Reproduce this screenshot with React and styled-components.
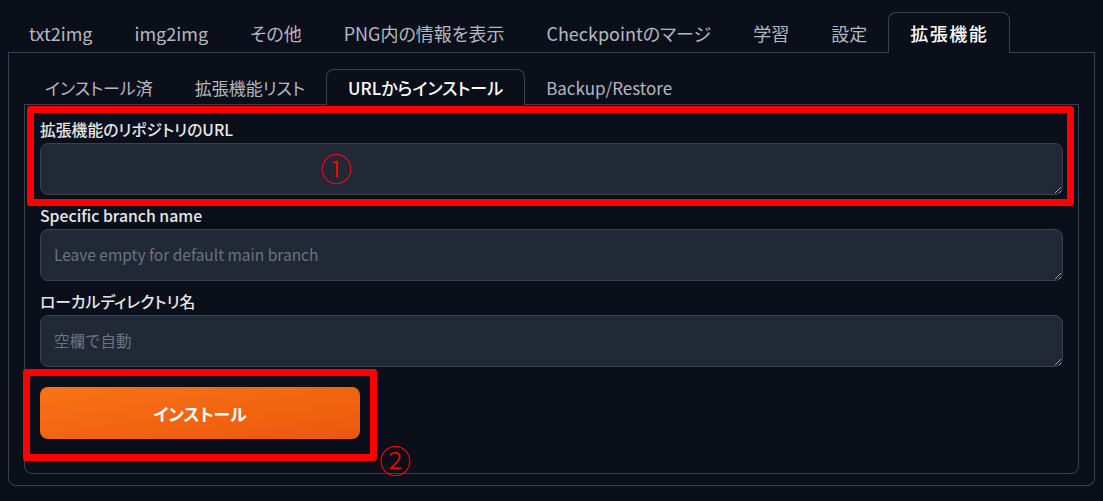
import styled, { createGlobalStyle } from "styled-components";

const GlobalStyle = createGlobalStyle`
    html, body {
        margin: 0;
        padding: 0;
        background: #0b0f19;
        color-scheme: dark;
    }
    body {
        font-family: "Noto Sans CJK JP", "Noto Sans", sans-serif;
        font-feature-settings: "palt";
    }
`;

const Page = styled.div`
    position: relative;
    width: 1103px;
    height: 501px;
    box-sizing: border-box;
    padding: 12px 8px 0 8px;
`;

const TabNav = styled.div`
    display: flex;
    height: ${(p) => p.$height}px;
    border-bottom: 1px solid #374151;
    box-sizing: content-box;
`;

const Tab = styled.button`
    font-family: inherit;
    font-feature-settings: "palt";
    font-size: ${(p) => p.$size}px;
    padding: 0 ${(p) => (p.$active ? 21 : 20)}px;
    background: #0b0f19;
    color: ${(p) => (p.$active ? "#ffffff" : "#b4b8c0")};
    font-weight: ${(p) => (p.$active ? 500 : 400)};
    letter-spacing: ${(p) => (p.$active && p.$wide ? "1.5px" : "0")};
    border: 1px solid ${(p) => (p.$active ? "#374151" : "transparent")};
    border-bottom: none;
    border-radius: 8px 8px 0 0;
    margin-bottom: ${(p) => (p.$active ? "-1px" : "0")};
    height: ${(p) => (p.$active ? "calc(100% + 1px)" : "100%")};
    cursor: pointer;
    white-space: nowrap;
`;

const OuterPanel = styled.div`
    border: 1px solid #374151;
    border-top: none;
    border-radius: 0 0 8px 8px;
    padding: 16px 15px 11px 15px;
`;

const InnerPanel = styled.div`
    border: 1px solid #374151;
    border-top: none;
    border-radius: 0 0 8px 8px;
    padding: 15px 15px 34px 15px;
    display: flex;
    flex-direction: column;
`;

const Fields = styled.div`
    display: flex;
    flex-direction: column;
    gap: 11px;
`;

const Field = styled.label`
    display: flex;
    flex-direction: column;
`;

const Label = styled.span`
    font-size: 15.8px;
    line-height: 20px;
    font-weight: 500;
    color: #e5e7eb;
    margin-bottom: 3px;
`;

const TextArea = styled.textarea`
    box-sizing: border-box;
    height: 52px;
    width: 100%;
    resize: vertical;
    background: #212836;
    border: 1px solid #374151;
    border-radius: 8px;
    padding: 13px 13px;
    font-family: inherit;
    font-size: 15.5px;
    color: #e5e7eb;
    outline: none;

    &::placeholder {
        color: #6b7280;
    }
`;

const InstallButton = styled.button`
    margin-top: 20px;
    width: 320px;
    height: 52px;
    border: none;
    border-radius: 8px;
    background: linear-gradient(to bottom right, #f97316, #ea580c);
    color: #ffffff;
    font-family: inherit;
    font-feature-settings: "palt";
    font-size: 17px;
    font-weight: 700;
    cursor: pointer;
`;

const Marker = styled.div`
    position: absolute;
    left: ${(p) => p.$x}px;
    top: ${(p) => p.$y}px;
    width: ${(p) => p.$w}px;
    height: ${(p) => p.$h}px;
    box-sizing: border-box;
    border: 7px solid #ff0000;
    border-radius: 3px;
    pointer-events: none;
`;

const Num = styled.span`
    position: absolute;
    left: ${(p) => p.$x}px;
    top: ${(p) => p.$y}px;
    font-family: "Noto Sans CJK JP", sans-serif;
    font-size: 32px;
    line-height: 1;
    font-weight: 300;
    color: #ff0000;
`;

const mainTabs = [
    "txt2img",
    "img2img",
    "その他",
    "PNG内の情報を表示",
    "Checkpointのマージ",
    "学習",
    "設定",
    "拡張機能",
];

const subTabs = ["インストール済", "拡張機能リスト", "URLからインストール", "Backup/Restore"];

export default function App() {
    return (
        <>
            <GlobalStyle />
            <Page>
                <TabNav $height={40}>
                    {mainTabs.map((t) => (
                        <Tab key={t} $size={18} $wide $active={t === "拡張機能"}>
                            {t}
                        </Tab>
                    ))}
                </TabNav>
                <OuterPanel>
                    <TabNav $height={35}>
                        {subTabs.map((t) => (
                            <Tab key={t} $size={17} $active={t === "URLからインストール"}>
                                {t}
                            </Tab>
                        ))}
                    </TabNav>
                    <InnerPanel>
                        <Fields>
                            <Field>
                                <Label>拡張機能のリポジトリのURL</Label>
                                <TextArea rows={1} />
                            </Field>
                            <Field>
                                <Label>Specific branch name</Label>
                                <TextArea rows={1} placeholder="Leave empty for default main branch" />
                            </Field>
                            <Field>
                                <Label>ローカルディレクトリ名</Label>
                                <TextArea rows={1} placeholder="空欄で自動" />
                            </Field>
                        </Fields>
                        <InstallButton>インストール</InstallButton>
                    </InnerPanel>
                </OuterPanel>

                <Marker $x={27} $y={106} $w={1047} $h={100} />
                <Marker $x={23} $y={369} $w={354} $h={92} />
                <Num $x={320} $y={151}>①</Num>
                <Num $x={379} $y={443}>②</Num>
            </Page>
        </>
    );
}
